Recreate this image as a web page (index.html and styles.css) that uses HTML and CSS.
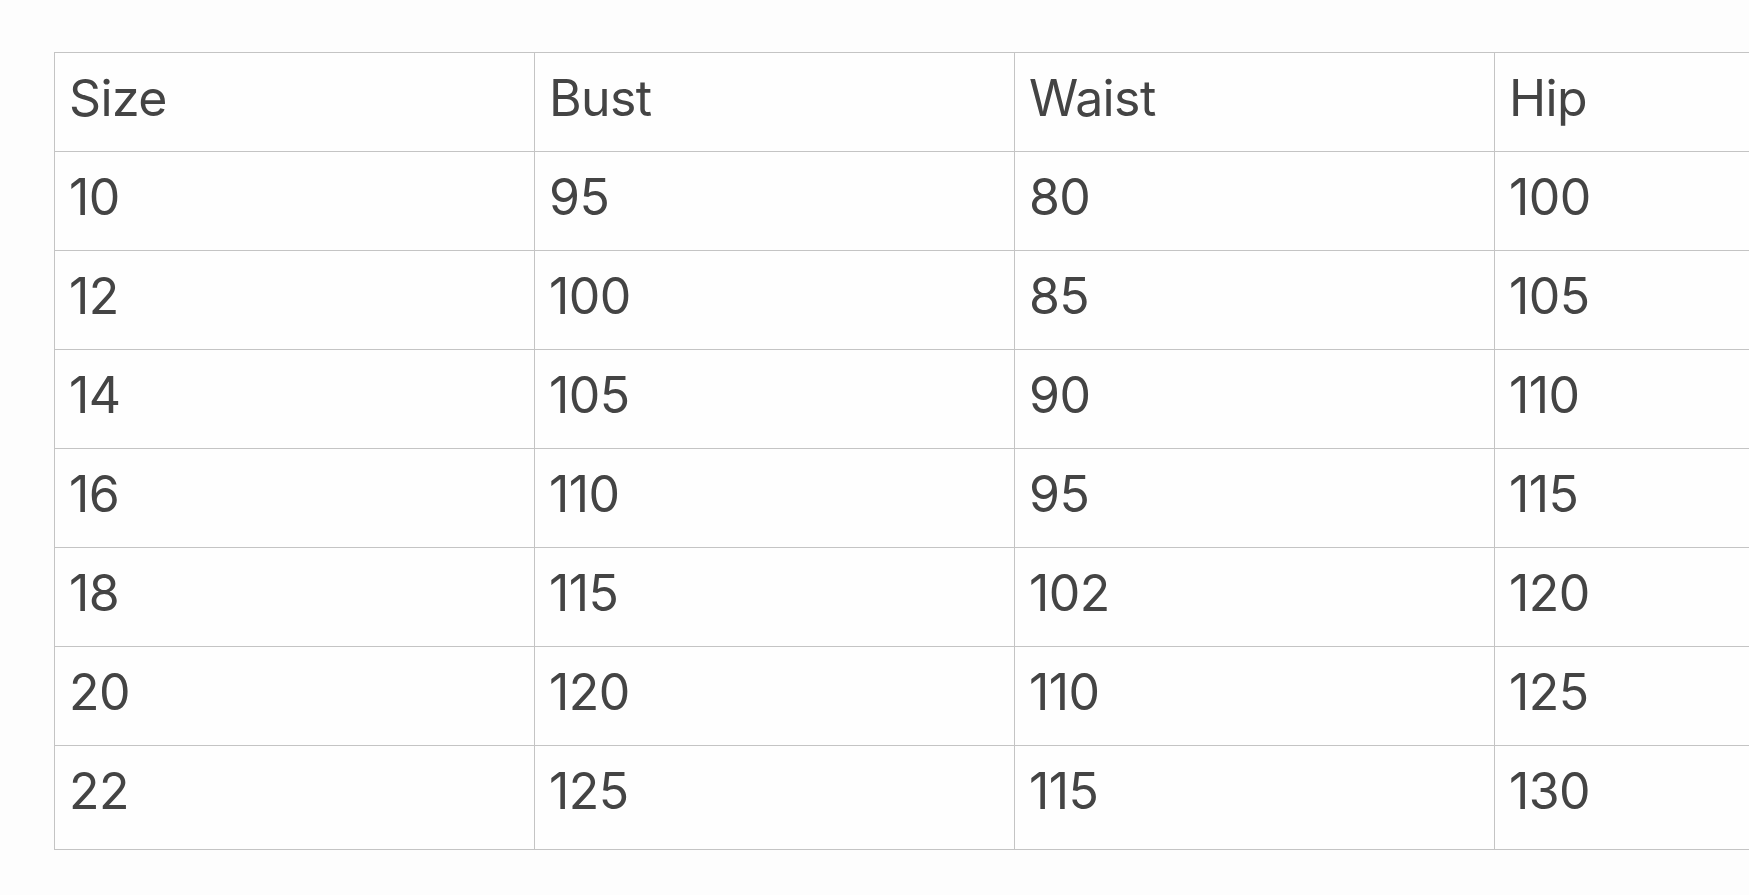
FILE: index.html
```html
<!DOCTYPE html>
<html lang="en">
<head>
<meta charset="utf-8">
<title>Size chart</title>
<link rel="stylesheet" href="styles.css">
</head>
<body>
<div class="wrap">
<table class="chart">
<thead>
<tr><th>Size</th><th>Bust</th><th>Waist</th><th>Hip</th></tr>
</thead>
<tbody>
<tr><td>10</td><td>95</td><td>80</td><td>100</td></tr>
<tr><td>12</td><td>100</td><td>85</td><td>105</td></tr>
<tr><td>14</td><td>105</td><td>90</td><td>110</td></tr>
<tr><td>16</td><td>110</td><td>95</td><td>115</td></tr>
<tr><td>18</td><td>115</td><td>102</td><td>120</td></tr>
<tr><td>20</td><td>120</td><td>110</td><td>125</td></tr>
<tr class="last"><td>22</td><td>125</td><td>115</td><td>130</td></tr>
</tbody>
</table>
</div>
</body>
</html>
```

FILE: styles.css
```css
html, body {
  margin: 0;
  padding: 0;
  background: #fdfdfd;
  overflow: hidden;
}
.wrap {
  padding: 52px 0 0 54px;
}
.chart {
  border-collapse: collapse;
  table-layout: fixed;
  width: 1920px;
  font-family: Inter, "Noto Sans", sans-serif;
  font-size: 50px;
  letter-spacing: -0.6px;
  color: #444;
}
.chart th,
.chart td {
  width: 480px;
  box-sizing: border-box;
  border: 1px solid #c4c4c4;
  padding: 12px 14px 20px;
  line-height: 66px;
  text-align: left;
  font-weight: 400;
  background: #fefefe;
}
.chart tr.last td {
  padding-bottom: 25px;
}
```
